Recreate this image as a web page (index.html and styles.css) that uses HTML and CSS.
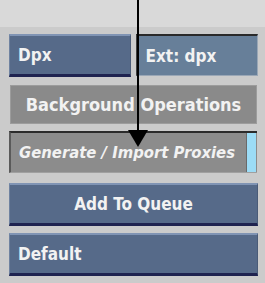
FILE: index.html
```html
<!DOCTYPE html>
<html>
<head>
    <title>Proxies Menu</title>
    <link rel="stylesheet" href="styles.css">
</head>
<body>
    <div class="top-band"></div>
    <div class="panel">
        <div class="row">
            <div class="btn blue">Dpx</div>
            <div class="btn field">Ext: dpx</div>
        </div>
        <div class="btn gray center">Background Operations</div>
        <div class="btn gray-field">
            <span class="label">Generate / Import Proxies</span>
            <span class="indicator"></span>
        </div>
        <div class="btn blue center queue">Add To Queue</div>
        <div class="btn blue">Default</div>
    </div>

    <!-- callout arrow -->
    <div class="callout">
        <div class="callout-line"></div>
        <div class="callout-head"></div>
    </div>
</body>
</html>
```

FILE: styles.css
```css
body {
    margin: 0;
    background-color: #cbcbcb;
    font-family: "DejaVu Sans Condensed", "DejaVu Sans", sans-serif;
    font-weight: bold;
    font-size: 17px;
    color: #f2f2f2;
    position: relative;
    height: 283px;
    overflow: hidden;
}
.top-band {
    height: 27px;
    background-color: #d9d9d9;
}
.panel {
    display: flex;
    flex-direction: column;
    gap: 7px;
    padding: 7px 7px 0 9px;
}
.row {
    display: flex;
    gap: 5px;
}
.row .btn {
    flex: 1;
}
.btn {
    box-sizing: border-box;
    height: 43px;
    display: flex;
    align-items: center;
    padding: 0 8px;
    white-space: nowrap;
}
.center {
    justify-content: center;
}
.blue {
    background-color: #566a89;
    border-top: 2px solid #8094b4;
    border-bottom: 3px solid #1f2350;
    border-left: 1px solid #6f82a0;
    border-right: 1px solid #4a5b78;
}
.field {
    background-color: #677f99;
    border-top: 2px solid #2a2a2a;
    border-left: 2px solid #3e3e3e;
    border-right: 1px solid #9aa7b6;
    border-bottom: 1px solid #9aa7b6;
    height: 42px;
}
.gray {
    background-color: #8a8a8a;
    border: 1px solid #9c9c9c;
    height: 39px;
    margin: 1px 1px 0 1px;
    font-size: 18px;
}
.gray-field {
    background-color: #8c8c8c;
    border-top: 2px solid #2b2b2b;
    border-left: 2px solid #5a5a5a;
    border-bottom: 1px solid #a0a0a0;
    height: 42px;
    padding-right: 0;
    justify-content: space-between;
    margin-right: 1px;
}
.gray-field .label {
    font-style: italic;
    font-size: 16.5px;
}
.indicator {
    width: 9px;
    align-self: stretch;
    background-color: #9cdcf6;
    border-left: 1px solid #6a6a6a;
    margin-right: 1px;
}
.queue {
    margin-top: 3px;
}
.callout {
    position: absolute;
    left: 128px;
    top: 0;
    width: 20px;
    display: flex;
    flex-direction: column;
    align-items: center;
}
.callout-line {
    width: 2px;
    height: 130px;
    background-color: #000;
}
.callout-head {
    width: 0;
    height: 0;
    border-left: 10px solid transparent;
    border-right: 10px solid transparent;
    border-top: 17px solid #000;
}
```
